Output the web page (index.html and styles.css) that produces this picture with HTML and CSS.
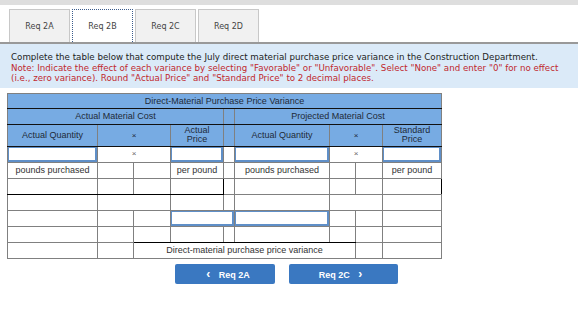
FILE: index.html
```html
<!DOCTYPE html>
<html lang="en">
<head>
    <meta charset="UTF-8">
    <title>Req 2B</title>
    <link rel="stylesheet" href="styles.css">
</head>
<body>
    <div class="top-bar"></div>

    <div class="tabs">
        <div class="tab">Req 2A</div>
        <div class="tab active">Req 2B</div>
        <div class="tab">Req 2C</div>
        <div class="tab">Req 2D</div>
    </div>

    <div class="instructions">
        <p>Complete the table below that compute the July direct material purchase price variance in the Construction Department.</p>
        <p class="note">Note: Indicate the effect of each variance by selecting "Favorable" or "Unfavorable". Select "None" and enter "0" for no effect (i.e., zero variance). Round "Actual Price" and "Standard Price" to 2 decimal places.</p>
    </div>

    <table class="sheet">
        <colgroup>
            <col style="width: 90px">
            <col style="width: 36px">
            <col style="width: 37px">
            <col style="width: 53px">
            <col style="width: 11px">
            <col style="width: 95px">
            <col style="width: 26px">
            <col style="width: 27px">
            <col style="width: 59px">
        </colgroup>
        <tr class="head h1">
            <th colspan="9">Direct-Material Purchase Price Variance</th>
        </tr>
        <tr class="head h2">
            <th colspan="4">Actual Material Cost</th>
            <th></th>
            <th colspan="4">Projected Material Cost</th>
        </tr>
        <tr class="head h3">
            <th>Actual Quantity</th>
            <th colspan="2" class="times">&times;</th>
            <th>Actual<br>Price</th>
            <th></th>
            <th>Actual Quantity</th>
            <th colspan="2" class="times">&times;</th>
            <th>Standard<br>Price</th>
        </tr>
        <tr class="entry">
            <td class="field"><input type="text"></td>
            <td colspan="2" class="x">&times;</td>
            <td class="field"><input type="text"></td>
            <td></td>
            <td class="field"><input type="text"></td>
            <td colspan="2" class="x">&times;</td>
            <td class="field"><input type="text"></td>
        </tr>
        <tr>
            <td>pounds purchased</td>
            <td></td>
            <td></td>
            <td>per pound</td>
            <td></td>
            <td>pounds purchased</td>
            <td></td>
            <td></td>
            <td>per pound</td>
        </tr>
        <tr>
            <td class="b-bottom"></td>
            <td class="b-bottom"></td>
            <td class="b-bottom"></td>
            <td class="b-bottom b-right"></td>
            <td></td>
            <td class="b-top b-left"></td>
            <td class="b-top"></td>
            <td class="b-top"></td>
            <td class="b-top b-right"></td>
        </tr>
        <tr>
            <td></td>
            <td colspan="2"></td>
            <td></td>
            <td></td>
            <td></td>
            <td colspan="2"></td>
            <td></td>
        </tr>
        <tr>
            <td></td>
            <td></td>
            <td class="b-left"></td>
            <td class="field" colspan="2"><input type="text"></td>
            <td class="field"><input type="text"></td>
            <td></td>
            <td class="b-left"></td>
            <td></td>
        </tr>
        <tr>
            <td></td>
            <td></td>
            <td class="b-left b-bottom"></td>
            <td class="b-bottom"></td>
            <td class="b-bottom"></td>
            <td class="b-bottom"></td>
            <td class="b-bottom"></td>
            <td class="b-left"></td>
            <td></td>
        </tr>
        <tr>
            <td></td>
            <td></td>
            <td colspan="5">Direct-material purchase price variance</td>
            <td></td>
            <td></td>
        </tr>
    </table>

    <div class="nav">
        <button class="nav-btn prev"><span class="arrow">&lsaquo;</span> Req 2A</button>
        <button class="nav-btn next">Req 2C <span class="arrow">&rsaquo;</span></button>
    </div>
</body>
</html>
```

FILE: styles.css
```css
body {
    margin: 0;
    font-family: "DejaVu Sans", Verdana, sans-serif;
    background: #fff;
    color: #333;
    width: 578px;
}
.top-bar {
    height: 5px;
    background: #dedede;
}
.tabs {
    display: flex;
    margin: 4px 0 0 9px;
    height: 33px;
}
.tab {
    width: 61px;
    margin-right: 2px;
    background: #f1f1f1;
    border: 1px solid #c8c8c8;
    border-bottom: none;
    font-size: 8px;
    color: #444;
    display: flex;
    align-items: center;
    justify-content: center;
    box-sizing: border-box;
}
.tab.active {
    background: #fff;
    border: 1px dotted #3a5c8c;
    border-bottom: none;
}
.instructions {
    background: #dbeaf8;
    border-top: 2px solid #999;
    padding: 8px 11px 4px;
    font-size: 8.7px;
    line-height: 10.5px;
    color: #222;
}
.instructions p {
    margin: 0;
}
.note {
    color: #c0282d;
}
.sheet {
    margin: 5px 0 0 7px;
    border-collapse: collapse;
    table-layout: fixed;
    width: 434px;
    font-family: "Liberation Sans", Arial, sans-serif;
    font-size: 9px;
    border: 1px solid #777;
}
.sheet th, .sheet td {
    border: 1px solid #808080;
    padding: 0;
    text-align: center;
    color: #333;
    font-weight: normal;
    line-height: 10px;
}
.sheet td {
    height: 15px;
}
.head th {
    background: #77abe3;
    color: #1e2a38;
    border-bottom: 1px solid #111;
}
.h1 th {
    height: 14px;
}
.h2 th {
    height: 15px;
}
.h3 th {
    height: 21px;
    line-height: 9px;
}
.times {
    font-weight: bold;
    font-size: 8px;
}
.sheet td.x {
    color: #666;
    font-size: 8px;
}
.entry td {
    height: 14px;
}
.field input {
    display: block;
    width: 100%;
    height: 15px;
    box-sizing: border-box;
    border: 1px solid #5f8fc8;
    border-width: 1px 2px 2px 1px;
    margin: 0;
    padding: 0;
    background: #fff;
}
.b-bottom {
    border-bottom: 1px solid #000 !important;
}
.b-top {
    border-top: 1px solid #000 !important;
}
.b-left {
    border-left: 1px solid #000 !important;
}
.b-right {
    border-right: 1px solid #000 !important;
}
.nav {
    display: flex;
    justify-content: center;
    gap: 14px;
    margin-top: 5px;
    padding-right: 5px;
}
.nav-btn {
    width: 100px;
    height: 20px;
    background: #3a78c1;
    color: #fff;
    border: none;
    border-radius: 2px;
    font-family: "Liberation Sans", Arial, sans-serif;
    font-weight: bold;
    font-size: 9px;
    cursor: pointer;
}
.nav-btn.next {
    width: 109px;
}
.arrow {
    font-size: 12px;
    margin: 0 6px;
}
```
